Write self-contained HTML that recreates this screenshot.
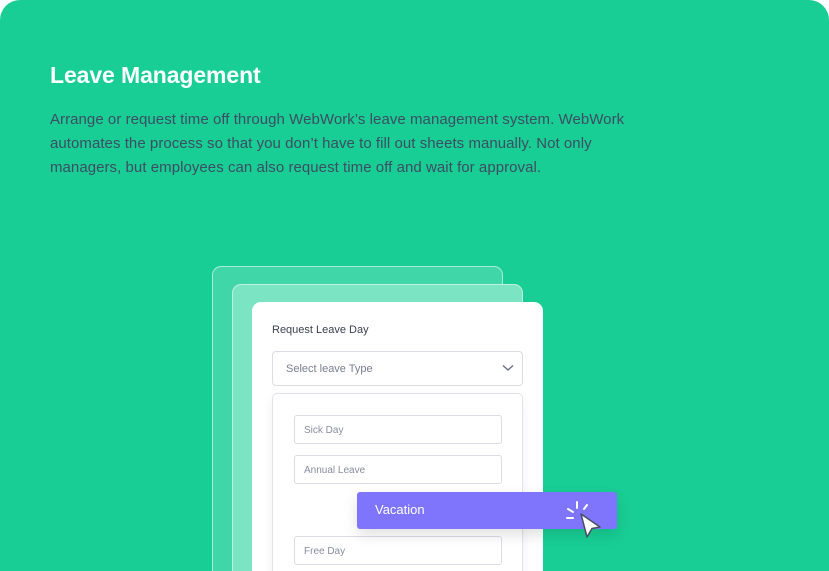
<!DOCTYPE html>
<html><head><style>
*{margin:0;padding:0;box-sizing:border-box}
html,body{width:829px;height:571px;overflow:hidden}
body{background:#fff;font-family:"Liberation Sans",sans-serif;position:relative}
.bg{position:absolute;left:0;top:0;width:829px;height:571px;background:#18ce94;border-radius:20px 20px 0 0;overflow:hidden}
h1{position:absolute;left:50px;top:62px;font-size:23px;font-weight:bold;color:#fff;letter-spacing:-0.1px}
.p{position:absolute;left:50px;top:108px;font-size:15px;line-height:24px;color:#3f4c64;white-space:nowrap;letter-spacing:0.05px}
.c1{position:absolute;left:212px;top:266px;width:291px;height:305px;border:1px solid rgba(255,255,255,.55);border-bottom:none;border-radius:9px 9px 0 0;background:rgba(255,255,255,.18)}
.c2{position:absolute;left:232px;top:284px;width:291px;height:287px;border:1px solid rgba(255,255,255,.5);border-bottom:none;border-radius:9px 9px 0 0;background:#7be4c2}
.c3{position:absolute;left:252px;top:302px;width:291px;height:269px;border-radius:9px 9px 0 0;background:#fff;overflow:hidden}
.t{position:absolute;left:20px;top:22px;font-size:11px;color:#3d4150}
.sel{position:absolute;left:20px;top:49px;width:251px;height:35px;border:1px solid #dcdce6;border-radius:4px;font-size:11px;color:#7a7d92;padding:11px 0 0 13px}
.sel svg{position:absolute;right:8px;top:12px}
.box{position:absolute;left:20px;top:91px;width:251px;height:250px;border:1px solid #e2e2ea;border-radius:5px;box-shadow:0 4px 12px rgba(0,0,0,.06)}
.in{position:absolute;left:21px;width:208px;height:29px;border:1px solid #dcdce6;border-radius:3px;font-size:10px;color:#8a8ca0;padding:9px 0 0 9px}
.vac{position:absolute;left:357px;top:492px;width:260px;height:37px;background:#7f74fc;border-radius:3px;color:#fff;font-size:13px;padding:10px 0 0 18px;box-shadow:0 6px 14px rgba(0,0,0,.12)}
</style></head><body>
<div class="bg">
<h1>Leave Management</h1>
<div class="p">Arrange or request time off through WebWork’s leave management system. WebWork<br>automates the process so that you don’t have to fill out sheets manually. Not only<br>managers, but employees can also request time off and wait for approval.</div>
<div class="c1"></div>
<div class="c2"></div>
<div class="c3">
<div class="t">Request Leave Day</div>
<div class="sel">Select leave Type<svg width="12" height="8" viewBox="0 0 12 8"><path d="M1 1.5L6 6L11 1.5" fill="none" stroke="#6e7085" stroke-width="1.4"/></svg></div>
<div class="box">
<div class="in" style="top:21px">Sick Day</div>
<div class="in" style="top:61px">Annual Leave</div>
<div class="in" style="top:142px">Free Day</div>
</div>
</div>
<div class="vac">Vacation</div>
<svg style="position:absolute;left:565px;top:500px" width="40" height="40" viewBox="0 0 40 40">
<g stroke="#fff" stroke-width="2" stroke-linecap="round"><path d="M12 2v6"/><path d="M3 9l5 3"/><path d="M22 5l-3 4"/><path d="M2 18h6"/></g>
<path d="M16 14L35 27L27 28.5L22 37Z" fill="#fff" stroke="#4a4f66" stroke-width="1.5" stroke-linejoin="round"/>
</svg>
</div>
</body></html>
